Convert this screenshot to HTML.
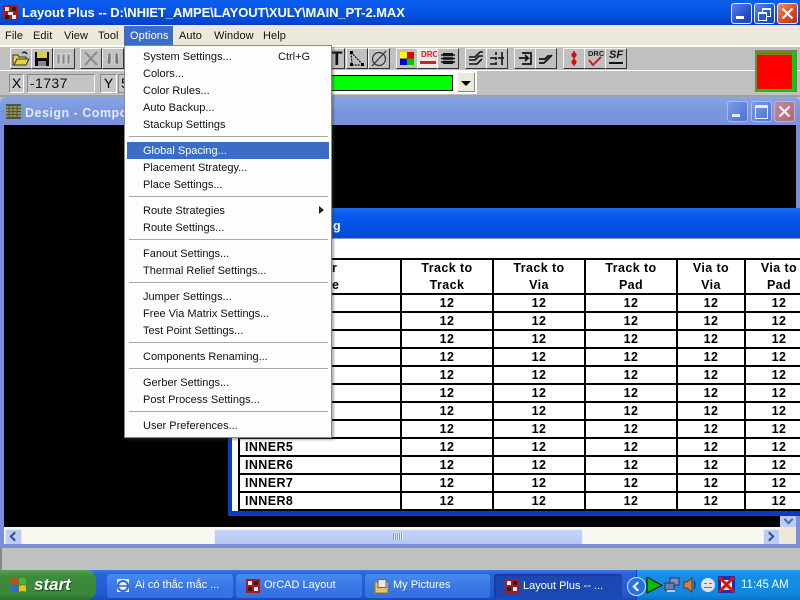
<!DOCTYPE html>
<html><head><meta charset="utf-8">
<style>
html,body{margin:0;padding:0;width:800px;height:600px;overflow:hidden;background:#c0c0c0}
body{position:relative;font-family:"Liberation Sans",sans-serif;font-size:11px;color:#000}
.a{position:absolute}
.t{position:absolute;white-space:nowrap;line-height:14px}
.m{position:absolute;left:143px;margin-top:1px;white-space:nowrap;line-height:14px;font-size:11px;letter-spacing:0;color:#111}
.s{position:absolute;left:129px;width:199px;height:1px;background:#a8a8a8;border-bottom:1px solid #fff}
.mb{position:absolute;top:29px;line-height:14px;font-size:11px;letter-spacing:.1px;color:#111}
.b{position:absolute;top:48px;width:20px;height:19px;background:#c0c0c0;border:1px solid;border-color:#f4f4f4 #333 #333 #f4f4f4;overflow:hidden}
.wb{position:absolute;width:19px;height:19px;border:1px solid #e8eefc;border-radius:3px;box-sizing:content-box}
.blue{background:linear-gradient(135deg,#5c86ee,#2452d0 60%,#1a3fc0)}
.red{background:linear-gradient(135deg,#ee8a66,#d8481e 60%,#b83010)}
table{position:absolute;left:238px;top:258px;border-collapse:collapse;table-layout:fixed;width:576px;background:#fff;font-weight:bold;font-size:12.5px;letter-spacing:.4px;color:#000}
td{border:2px solid #000;text-align:center;height:16px;padding:0;line-height:16px;overflow:hidden;white-space:nowrap}
td.l{text-align:left;padding-left:5px}
tr.h td{height:33px;line-height:16.5px;white-space:normal}
.tb{position:absolute;top:574px;height:24px;border-radius:3px;background:linear-gradient(#4a8af0,#3a78e6 50%,#3470e0);color:#fff;font-size:11px;line-height:23px;letter-spacing:0;white-space:nowrap}
.ic{position:absolute;top:5px;left:8px;width:14px;height:14px}
</style></head><body>

<!-- main title bar -->
<div class="a" style="left:0;top:0;width:800px;height:25px;background:linear-gradient(#0a5ee8,#0d5cf0 15%,#0450dd 60%,#0340c8)"></div>
<svg class="a" style="left:3px;top:5px" width="15" height="15"><rect width="15" height="15" fill="#b01818"/><rect x="2" y="2" width="4" height="4" fill="#eee"/><rect x="9" y="2" width="4" height="4" fill="#222"/><rect x="5" y="7" width="5" height="3" fill="#eee"/><rect x="2" y="10" width="4" height="4" fill="#222"/><rect x="9" y="10" width="4" height="4" fill="#eee"/></svg>
<div class="t" style="left:22px;top:6px;color:#fff;font-weight:bold;font-size:13px;letter-spacing:-.09px">Layout Plus -- D:\NHIET_AMPE\LAYOUT\XULY\MAIN_PT-2.MAX</div>
<div class="wb blue" style="left:731px;top:3px"><div class="a" style="left:4px;top:12px;width:8px;height:3px;background:#fff"></div></div>
<div class="wb blue" style="left:754px;top:3px"><div class="a" style="left:7px;top:4px;width:7px;height:6px;border:1px solid #fff;border-top-width:2px"></div><div class="a" style="left:3px;top:8px;width:7px;height:6px;border:1px solid #fff;border-top-width:2px;background:#2a5ad8"></div></div>
<div class="wb red" style="left:777px;top:3px"><svg class="a" style="left:3px;top:3px" width="13" height="13"><path d="M1.5 1.5L11.5 11.5M11.5 1.5L1.5 11.5" stroke="#fff" stroke-width="2.2"/></svg></div>

<!-- menu bar -->
<div class="a" style="left:0;top:25px;width:800px;height:20px;background:#ece9d8"></div>
<div class="a" style="left:0;top:45px;width:800px;height:2px;background:#fdfdf8"></div>
<div class="mb" style="left:5px">File</div>
<div class="mb" style="left:33px">Edit</div>
<div class="mb" style="left:64px">View</div>
<div class="mb" style="left:98px">Tool</div>
<div class="a" style="left:124px;top:26px;width:49px;height:19px;background:#3a6cc8"></div>
<div class="mb" style="left:130px;color:#fff">Options</div>
<div class="mb" style="left:179px">Auto</div>
<div class="mb" style="left:214px">Window</div>
<div class="mb" style="left:263px">Help</div>

<!-- toolbar 1 -->
<div class="a" style="left:0;top:47px;width:800px;height:23px;background:#c0c0c0;border-bottom:1px solid #fff"></div>
<div class="b" style="left:10px"><svg width="20" height="19"><path d="M2 16V6h5l1 2h7v2H6L3 16zM3 16l3-6h12l-3 6z" fill="#e8d040" stroke="#333" stroke-width="1"/><path d="M11 4q3-2 5 1" stroke="#111" fill="none" stroke-width="1.3"/></svg></div>
<div class="b" style="left:31px"><svg width="20" height="19"><rect x="3" y="3" width="14" height="14" fill="#0a0a0a"/><rect x="5" y="3" width="10" height="6" fill="#d8d040"/><rect x="6" y="12" width="8" height="5" fill="#888"/></svg></div>
<div class="b" style="left:53px"><svg width="20" height="19"><path d="M3 15V6l3-2v11zM8 15V6l3-2v11zM13 15V6l3-2v11z" fill="#888" stroke="#eee" stroke-width=".6"/></svg></div>
<div class="b" style="left:80px"><svg width="20" height="19"><path d="M4 3L16 16M16 3L4 16" stroke="#8a8a8a" stroke-width="2"/></svg></div>
<div class="b" style="left:102px"><svg width="20" height="19"><path d="M5 4h3v11H4zM12 4h3l1 11h-4z" fill="#777" stroke="#eee" stroke-width=".6"/></svg></div>

<div class="b" style="left:331px;width:13px;border-left:none"><div class="t" style="left:0;top:1px;font-size:19px;font-weight:bold;line-height:19px;color:#111">T</div></div>
<div class="b" style="left:346px"><svg width="20" height="19"><path d="M4 3L16 16H5z" fill="none" stroke="#111" stroke-width="1.2" stroke-dasharray="2 1"/><rect x="3" y="2" width="3" height="3"/><rect x="14" y="14" width="3" height="3"/><rect x="3" y="14" width="3" height="3"/></svg></div>
<div class="b" style="left:368px"><svg width="20" height="19"><circle cx="10" cy="10" r="6.5" fill="none" stroke="#333" stroke-width="1.2"/><path d="M3 17L17 2" stroke="#333" stroke-width="1.2"/></svg></div>

<div class="b" style="left:396px"><svg width="20" height="19"><rect x="3" y="3" width="7" height="6.5" fill="#ffff00"/><rect x="10" y="3" width="7" height="6.5" fill="#e00000"/><rect x="3" y="9.5" width="7" height="6.5" fill="#0000e0"/><rect x="10" y="9.5" width="7" height="6.5" fill="#00c000"/></svg></div>
<div class="b" style="left:417px;background:#e8e8e8"><div class="t" style="left:3px;top:1px;font-size:8px;font-weight:bold;color:#d02020;line-height:10px">DRC</div><div class="a" style="left:2px;top:12px;width:16px;height:3px;background:#d02020"></div></div>
<div class="b" style="left:437px"><svg width="20" height="19"><rect x="5" y="4" width="10" height="11" fill="#111"/><path d="M3 6h14M3 9.500h14M3 13h14" stroke="#111" stroke-width="1.5"/><path d="M5 7.800h10M5 11.200h10" stroke="#c0c0c0" stroke-width="1"/></svg></div>
<div class="b" style="left:465px"><svg width="20" height="19"><path d="M3 8h6l5-5h3M3 11h6l4-4h4M3 15h8l5-5" fill="none" stroke="#111" stroke-width="1.6"/></svg></div>
<div class="b" style="left:486px"><svg width="20" height="19"><path d="M3 9h6M11 9h6M3 15h5M9 3v3M9 8v3M9 13v3M15 3v13" stroke="#111" stroke-width="1.6" fill="none"/></svg></div>
<div class="b" style="left:514px"><svg width="20" height="19"><path d="M4 9h9l-3-3M13 9l-3 3M7 4h9v11H7" fill="none" stroke="#111" stroke-width="1.7"/></svg></div>
<div class="b" style="left:535px"><svg width="20" height="19"><path d="M3 14h5l8-8M3 10h6l3-3h3" fill="none" stroke="#111" stroke-width="1.8"/></svg></div>
<div class="b" style="left:563px"><svg width="20" height="19"><path d="M10 2v15" stroke="#c01818" stroke-width="1.5"/><circle cx="10" cy="6" r="2.6" fill="#d01010"/><circle cx="10" cy="13" r="2.6" fill="#d01010"/></svg></div>
<div class="b" style="left:584px"><div class="t" style="left:3px;top:0;font-size:7.500px;font-weight:bold;line-height:9px;color:#222">DRC</div><svg class="a" style="left:0;top:0" width="20" height="19"><path d="M4 11l4 5 8-8" fill="none" stroke="#d02020" stroke-width="2"/></svg></div>
<div class="b" style="left:605px"><div class="t" style="left:3px;top:1px;font-size:11px;font-weight:bold;font-style:italic;line-height:11px;color:#111">SF</div><div class="a" style="left:3px;top:13px;width:14px;height:2px;background:#111"></div></div>

<!-- toolbar 2 -->
<div class="a" style="left:0;top:71px;width:800px;height:24px;background:#c0c0c0"></div>
<div class="a" style="left:9px;top:74px;width:13px;height:17px;background:#c8c8c8;border:1px solid;border-color:#888 #fff #fff #888;font-size:14px;line-height:17px;text-align:center">X</div>
<div class="a" style="left:27px;top:74px;width:64px;height:17px;background:#c4c4c4;border:1px solid;border-color:#888 #f4f4f4 #f4f4f4 #888;font-size:14px;line-height:17px;padding-left:2px;box-sizing:content-box;letter-spacing:.4px;color:#111">-1737</div>
<div class="a" style="left:100px;top:74px;width:15px;height:17px;background:#c8c8c8;border:1px solid;border-color:#888 #fff #fff #888;font-size:14px;line-height:17px;text-align:center">Y</div>
<div class="a" style="left:118px;top:74px;width:10px;height:17px;background:#c4c4c4;border:1px solid #888;font-size:14px;line-height:17px;padding-left:2px">5</div>
<div class="a" style="left:330px;top:71px;width:147px;height:23px;background:#fff"></div>
<div class="a" style="left:330px;top:75px;width:122px;height:14px;background:#00ff00;border:1px solid #000;border-left:none"></div>
<div class="a" style="left:458px;top:73px;width:16px;height:18px;background:#ece9d8;border-right:1px solid #888;border-bottom:1px solid #888"><div class="a" style="left:3px;top:8px;width:0;height:0;border:5px solid transparent;border-top:5px solid #000;border-bottom:none"></div></div>
<div class="a" style="left:477px;top:70px;width:278px;height:1px;background:#fff"></div>
<div class="a" style="left:755px;top:50px;width:42px;height:42px;background:#00d000;border:1px solid #777;box-sizing:border-box"></div>
<div class="a" style="left:757px;top:52px;width:35px;height:3px;background:#808000"></div>
<div class="a" style="left:757px;top:55px;width:35px;height:34px;background:#ff0000"></div>

<!-- child window -->
<div class="a" style="left:0;top:95px;width:800px;height:2px;background:#9aa0b0"></div>
<div class="a" style="left:0;top:97px;width:800px;height:28px;background:linear-gradient(#8aa4e6,#7a98de 50%,#7a92d8);border-radius:6px 6px 0 0"></div>
<svg class="a" style="left:6px;top:104px" width="15" height="15"><rect width="15" height="15" fill="#2a6a2a"/><path d="M0 3h15M0 6h15M0 9h15M0 12h15" stroke="#d8b040" stroke-width="1.200"/><path d="M3 0v15M7 0v15M11 0v15" stroke="#8a2a8a" stroke-width="1"/></svg>
<div class="t" style="left:25px;top:106px;color:#e4eafa;font-weight:bold;font-size:12.500px;letter-spacing:.5px">Design - Compor</div>
<div class="wb" style="left:727px;top:101px;background:linear-gradient(135deg,#7a9ae8,#4a72d8);border-color:#a8bcec"><div class="a" style="left:4px;top:12px;width:8px;height:3px;background:#e8eefc"></div></div>
<div class="wb" style="left:751px;top:101px;background:linear-gradient(135deg,#7a9ae8,#4a72d8);border-color:#a8bcec"><div class="a" style="left:3px;top:3px;width:11px;height:10px;border:1px solid #e8eefc;border-top-width:3px"></div></div>
<div class="wb" style="left:774px;top:101px;background:linear-gradient(135deg,#c08a98,#b06878);border-color:#c8b0c0"><svg class="a" style="left:3px;top:3px" width="13" height="13"><path d="M1.500 1.500L11.500 11.500M11.500 1.500L1.500 11.500" stroke="#f0f0f4" stroke-width="2.200"/></svg></div>

<div class="a" style="left:0;top:125px;width:800px;height:402px;background:#000"></div>
<div class="a" style="left:0;top:125px;width:4px;height:423px;background:#7a8edc"></div>
<div class="a" style="left:796px;top:125px;width:4px;height:423px;background:#7a8edc"></div>

<!-- dialog -->
<div class="a" style="left:228px;top:208px;width:572px;height:308px;background:#0a3ac8"></div>
<div class="a" style="left:228px;top:208px;width:572px;height:31px;background:linear-gradient(#1a6af0,#0858ec 25%,#0450e0 70%,#0344d0)"></div>
<div class="t" style="left:333px;top:219px;color:#fff;font-weight:bold;font-size:12.500px">g</div>
<div class="a" style="left:232px;top:238px;width:568px;height:1px;background:#8a98b8"></div>
<div class="a" style="left:232px;top:239px;width:568px;height:272px;background:#fff;overflow:hidden"></div>

<table>
<colgroup><col style="width:162px"><col style="width:92px"><col style="width:92px"><col style="width:92px"><col style="width:68px"><col style="width:68px"></colgroup>
<tr class="h"><td style="text-align:left;padding-left:92px">r<br>e</td><td>Track to<br>Track</td><td>Track to<br>Via</td><td>Track to<br>Pad</td><td>Via to<br>Via</td><td>Via to<br>Pad</td></tr>
<tr><td></td><td>12</td><td>12</td><td>12</td><td>12</td><td>12</td></tr>
<tr><td></td><td>12</td><td>12</td><td>12</td><td>12</td><td>12</td></tr>
<tr><td></td><td>12</td><td>12</td><td>12</td><td>12</td><td>12</td></tr>
<tr><td></td><td>12</td><td>12</td><td>12</td><td>12</td><td>12</td></tr>
<tr><td></td><td>12</td><td>12</td><td>12</td><td>12</td><td>12</td></tr>
<tr><td></td><td>12</td><td>12</td><td>12</td><td>12</td><td>12</td></tr>
<tr><td></td><td>12</td><td>12</td><td>12</td><td>12</td><td>12</td></tr>
<tr><td></td><td>12</td><td>12</td><td>12</td><td>12</td><td>12</td></tr>
<tr><td class="l">INNER5</td><td>12</td><td>12</td><td>12</td><td>12</td><td>12</td></tr>
<tr><td class="l">INNER6</td><td>12</td><td>12</td><td>12</td><td>12</td><td>12</td></tr>
<tr><td class="l">INNER7</td><td>12</td><td>12</td><td>12</td><td>12</td><td>12</td></tr>
<tr><td class="l">INNER8</td><td>12</td><td>12</td><td>12</td><td>12</td><td>12</td></tr>
</table>
<div class="a" style="left:228px;top:511px;width:572px;height:5px;background:#0a3ac8"></div>
<div class="a" style="left:228px;top:516px;width:568px;height:11px;background:#000"></div>

<!-- v scroll end -->
<div class="a" style="left:780px;top:516px;width:16px;height:11px;background:#bcccf4"><div class="a" style="left:5px;top:0;width:5px;height:5px;border-left:2px solid #4a68b8;border-bottom:2px solid #4a68b8;transform:rotate(-45deg)"></div></div>

<!-- h scrollbar -->
<div class="a" style="left:4px;top:527px;width:792px;height:17px;background:#f8f7f0"></div>
<div class="a" style="left:5px;top:529px;width:15px;height:14px;background:#bcccf4;border:1px solid #e4ecfc"><div class="a" style="left:5px;top:3px;width:5px;height:5px;border-left:2px solid #34508c;border-bottom:2px solid #34508c;transform:rotate(45deg)"></div></div>
<div class="a" style="left:214px;top:529px;width:367px;height:14px;background:linear-gradient(#c4d4f8,#b4c8f4);border:1px solid #e8eefc;border-radius:2px;box-sizing:content-box"></div>
<div class="a" style="left:393px;top:533px;width:10px;height:7px;background:repeating-linear-gradient(90deg,#8098d8 0 1px,#e8eefc 1px 2px)"></div>
<div class="a" style="left:763px;top:529px;width:15px;height:14px;background:#bcccf4;border:1px solid #e4ecfc"><div class="a" style="left:2px;top:3px;width:5px;height:5px;border-right:2px solid #34508c;border-top:2px solid #34508c;transform:rotate(45deg)"></div></div>
<div class="a" style="left:780px;top:527px;width:16px;height:17px;background:#ece9d8"></div>
<div class="a" style="left:0;top:544px;width:800px;height:4px;background:#7a8edc"></div>

<!-- status -->
<div class="a" style="left:0;top:548px;width:800px;height:22px;background:#c0c0be"></div>
<div class="a" style="left:0;top:548px;width:2px;height:22px;background:#888"></div>

<!-- menu -->
<div class="a" style="left:124px;top:45px;width:208px;height:393px;background:#fdfdfb;border:1px solid #8a8a80;box-sizing:border-box;box-shadow:2px 2px 2px rgba(60,60,60,.4)"></div>
<div class="m" style="top:49px">System Settings...</div>
<div class="m" style="top:49px;left:278px">Ctrl+G</div>
<div class="m" style="top:66px">Colors...</div>
<div class="m" style="top:83px">Color Rules...</div>
<div class="m" style="top:100px">Auto Backup...</div>
<div class="m" style="top:117px">Stackup Settings</div>
<div class="s" style="top:136px"></div>
<div class="a" style="left:127px;top:142px;width:202px;height:17px;background:#3a6cc8"></div>
<div class="m" style="top:143px;color:#fff">Global Spacing...</div>
<div class="m" style="top:160px">Placement Strategy...</div>
<div class="m" style="top:177px">Place Settings...</div>
<div class="s" style="top:196px"></div>
<div class="m" style="top:203px">Route Strategies</div>
<div class="a" style="left:319px;top:206px;width:0;height:0;border:4px solid transparent;border-left:5px solid #222;border-right:none"></div>
<div class="m" style="top:220px">Route Settings...</div>
<div class="s" style="top:239px"></div>
<div class="m" style="top:246px">Fanout Settings...</div>
<div class="m" style="top:263px">Thermal Relief Settings...</div>
<div class="s" style="top:282px"></div>
<div class="m" style="top:289px">Jumper Settings...</div>
<div class="m" style="top:306px">Free Via Matrix Settings...</div>
<div class="m" style="top:323px">Test Point Settings...</div>
<div class="s" style="top:342px"></div>
<div class="m" style="top:349px">Components Renaming...</div>
<div class="s" style="top:368px"></div>
<div class="m" style="top:375px">Gerber Settings...</div>
<div class="m" style="top:392px">Post Process Settings...</div>
<div class="s" style="top:411px"></div>
<div class="m" style="top:418px">User Preferences...</div>

<!-- taskbar -->
<div class="a" style="left:0;top:570px;width:800px;height:30px;background:linear-gradient(#3a78e8,#2a62dc 12%,#2458d4 80%,#1a48b8)"></div>
<div class="a" style="left:0;top:570px;width:96px;height:30px;background:linear-gradient(#5aa05a,#3c8c3c 20%,#3a883a 80%,#2c702c);border-radius:0 10px 10px 0"></div>
<svg class="a" style="left:9px;top:576px" width="20" height="18"><path d="M2 3q4-2 7 0v6q-3-2-7 0z" fill="#d84020"/><path d="M10 2q4-1 7 1v6q-3-2-7 0z" fill="#50b030"/><path d="M2 10q4-2 7 0v6q-3-2-7 0z" fill="#3068d8"/><path d="M10 10q4-2 7 0v6q-3-2-7 0z" fill="#e8c020"/></svg>
<div class="t" style="left:34px;top:575px;color:#fff;font-weight:bold;font-style:italic;font-size:17px;line-height:20px;text-shadow:1px 1px 1px #1a4a1a">start</div>

<div class="tb" style="left:107px;width:126px"><svg class="ic" style="left:8px;top:4px" width="16" height="16"><rect x="2" y="1" width="12" height="14" fill="#eef" /><circle cx="8" cy="8" r="5" fill="none" stroke="#2a68d8" stroke-width="2"/><path d="M3 8h10" stroke="#2a68d8" stroke-width="1.500"/></svg><span class="a" style="left:28px">Ai có thắc mắc ...</span></div>
<div class="tb" style="left:236px;width:126px"><svg class="ic" style="left:10px" width="14" height="14"><rect width="14" height="14" fill="#b01818"/><rect x="2" y="2" width="4" height="4" fill="#eee"/><rect x="8" y="2" width="4" height="4" fill="#222"/><rect x="2" y="8" width="4" height="4" fill="#222"/><rect x="8" y="8" width="4" height="4" fill="#eee"/></svg><span class="a" style="left:28px">OrCAD Layout</span></div>
<div class="tb" style="left:365px;width:125px"><svg class="ic" style="left:9px" width="15" height="15"><rect x="1" y="3" width="13" height="11" fill="#e8c060" stroke="#a87820"/><rect x="4" y="0.500" width="8" height="8" fill="#e8e8f0" stroke="#666"/></svg><span class="a" style="left:28px">My Pictures</span></div>
<div class="tb" style="left:494px;width:128px;background:#1c48b4;box-shadow:inset 1px 1px 2px #143088"><svg class="ic" style="left:11px;top:5px" width="14" height="14"><rect width="14" height="14" fill="#b01818"/><rect x="2" y="2" width="4" height="4" fill="#eee"/><rect x="8" y="2" width="4" height="4" fill="#222"/><rect x="2" y="8" width="4" height="4" fill="#222"/><rect x="8" y="8" width="4" height="4" fill="#eee"/></svg><span class="a" style="left:29px;top:1px">Layout Plus -- ...</span></div>

<!-- tray -->
<div class="a" style="left:636px;top:570px;width:164px;height:30px;background:linear-gradient(#20a0f0,#1490e8 15%,#1088e0 80%,#0c70c8);border-left:1px solid #1040a0"></div>
<div class="a" style="left:627px;top:577px;width:17px;height:17px;border-radius:50%;background:#2a70e0;border:1px solid #d0e4ff"><div class="a" style="left:6px;top:5px;width:5px;height:5px;border-left:2px solid #fff;border-bottom:2px solid #fff;transform:rotate(45deg)"></div></div>
<svg class="a" style="left:646px;top:577px" width="17" height="17"><path d="M1 0L16 8.500L1 16z" fill="#00c000" stroke="#000"/></svg>
<svg class="a" style="left:664px;top:577px" width="16" height="16"><rect x="6" y="1" width="9" height="7" fill="#8090c8" stroke="#334"/><rect x="1" y="6" width="9" height="7" fill="#6a7ab8" stroke="#334"/><rect x="3" y="13" width="8" height="2" fill="#bcc"/></svg>
<svg class="a" style="left:682px;top:577px" width="16" height="16"><path d="M2 5h3l5-4v14l-5-4H2z" fill="#d88040" stroke="#703010"/><path d="M12 4q2 4 0 8" stroke="#222" fill="none"/></svg>
<div class="a" style="left:701px;top:578px;width:14px;height:14px;border-radius:50%;background:#dde4ee"><div class="a" style="left:3px;top:9px;width:8px;height:1px;background:#777"></div><div class="a" style="left:3px;top:5px;width:3px;height:1px;background:#777"></div><div class="a" style="left:8px;top:5px;width:3px;height:1px;background:#777"></div></div>
<svg class="a" style="left:718px;top:576px" width="17" height="17"><rect width="17" height="17" fill="#2030a0"/><rect x="3" y="4" width="11" height="10" fill="#fff"/><path d="M1 1L16 16M16 1L1 16" stroke="#e01010" stroke-width="3"/></svg>
<div class="t" style="left:741px;top:578px;color:#fff;font-size:11.500px;letter-spacing:0">11:45 AM</div>

</body></html>
